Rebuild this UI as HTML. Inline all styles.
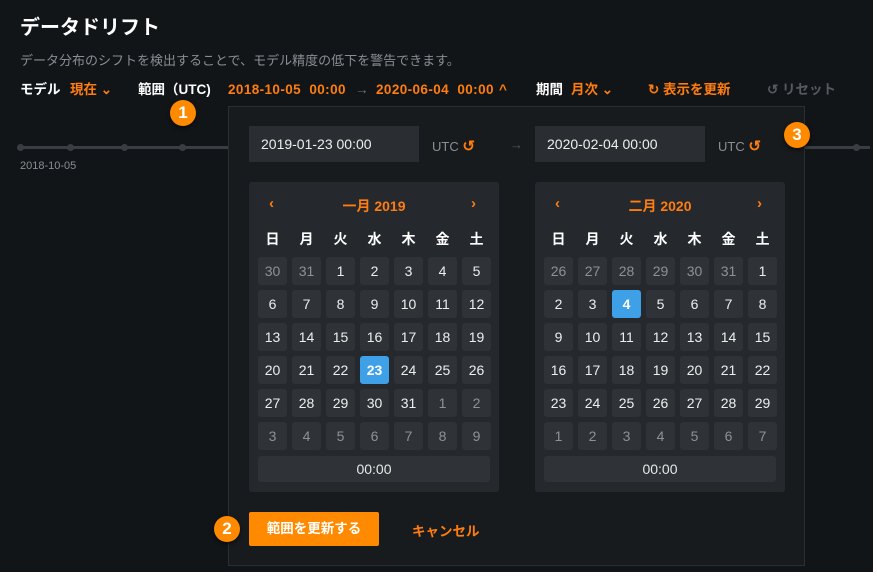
<!DOCTYPE html>
<html><head><meta charset="utf-8"><style>
*{margin:0;padding:0;box-sizing:border-box}
body{width:877px;height:578px;background:#121518;font-family:"Liberation Sans","Noto Sans CJK JP",sans-serif;position:relative;overflow:hidden;color:#e8e8e8}
.a{position:absolute;white-space:nowrap}
.o{color:#ff7d10}
.h{font-size:20px;font-weight:bold;color:#fff;left:20px;top:11px}
.sub{left:20px;top:50px;font-size:13px;color:#8a8e93}
.bar{top:81px;height:18px;line-height:18px;font-size:13.5px;font-weight:bold}
.pop{left:228px;top:106px;width:577px;height:460px;background:#181b1e;border:1px solid #2b2f34}
.inp{top:126px;width:170px;height:36px;background:#2a2d31;font-size:14px;color:#eee;padding:10px 12px}
.utc{top:137px;font-size:13px;color:#8a8e93}
.cal{top:182px;width:250px;height:310px;background:#25282c;border-radius:3px}
.mh{position:absolute;top:14px;left:0;width:100%;text-align:center;font-size:14px;font-weight:bold;color:#ff7d10}
.nav{position:absolute;top:13px;font-size:15px;font-weight:bold;color:#ff7d10}
.wd{position:absolute;top:47px;left:9px;display:grid;grid-template-columns:repeat(7,29px);column-gap:5px;font-size:14px;font-weight:bold;color:#fff;text-align:center}
.g{position:absolute;top:75px;left:9px;display:grid;grid-template-columns:repeat(7,29px);grid-auto-rows:28px;gap:5px}
.g div{background:#2f3237;border-radius:3px;font-size:14px;color:#eee;text-align:center;line-height:28px}
.g .m{color:#8e9297}
.g .s{background:#3ea0e6;color:#fff;font-weight:bold}
.tm{position:absolute;left:9px;top:274px;width:232px;height:26px;background:#2f3237;border-radius:3px;text-align:center;line-height:26px;font-size:14px}
.badge{width:26px;height:26px;border-radius:50%;background:#ff8a00;color:#fff;font-weight:bold;font-size:17px;text-align:center;line-height:26px;box-shadow:0 2px 4px rgba(0,0,0,.6)}
.dot{width:7px;height:7px;border-radius:50%;background:#3a3e43;top:144px}
</style></head><body>
<div class="a h">データドリフト</div>
<div class="a sub">データ分布のシフトを検出することで、モデル精度の低下を警告できます。</div>
<div class="a bar" style="left:20px;color:#fff">モデル</div>
<div class="a bar o" style="left:70px">現在 ⌄</div>
<div class="a bar" style="left:138px;color:#fff">範囲（UTC)</div>
<div class="a bar o" style="left:228px;letter-spacing:0.4px">2018-10-05&nbsp; 00:00</div>
<div class="a bar" style="left:355px;color:#777;font-weight:normal">→</div>
<div class="a bar o" style="left:376px;letter-spacing:0.4px">2020-06-04&nbsp; 00:00</div>
<div class="a bar o" style="left:499px">^</div>
<div class="a bar" style="left:536px;color:#fff">期間</div>
<div class="a bar o" style="left:571px">月次 ⌄</div>
<div class="a bar o" style="left:648px">↻ 表示を更新</div>
<div class="a bar" style="left:767px;color:#555a60">↺ リセット</div>
<div class="a" style="left:20px;top:146px;width:208px;height:3px;background:#3a3e43"></div>
<div class="a dot" style="left:17px"></div><div class="a dot" style="left:67px"></div><div class="a dot" style="left:121px"></div><div class="a dot" style="left:179px"></div>
<div class="a" style="left:805px;top:146px;width:65px;height:3px;background:#3a3e43"></div>
<div class="a dot" style="left:853px"></div>
<div class="a" style="left:20px;top:160px;font-size:11px;color:#8a8e93">2018-10-05</div>
<div class="a pop"></div>
<div class="a inp" style="left:249px">2019-01-23 00:00</div>
<div class="a utc" style="left:432px">UTC <span class="o" style="font-weight:bold;font-size:15px">↺</span></div>
<div class="a utc" style="left:510px;color:#555">→</div>
<div class="a inp" style="left:535px">2020-02-04 00:00</div>
<div class="a utc" style="left:718px">UTC <span class="o" style="font-weight:bold;font-size:15px">↺</span></div>
<div class="a cal" style="left:249px"><div class="mh">一月 2019</div><div class="nav" style="left:20px">‹</div><div class="nav" style="left:222px">›</div>
<div class="wd"><span>日</span><span>月</span><span>火</span><span>水</span><span>木</span><span>金</span><span>土</span></div>
<div class="g"><div class="m">30</div><div class="m">31</div><div>1</div><div>2</div><div>3</div><div>4</div><div>5</div><div>6</div><div>7</div><div>8</div><div>9</div><div>10</div><div>11</div><div>12</div><div>13</div><div>14</div><div>15</div><div>16</div><div>17</div><div>18</div><div>19</div><div>20</div><div>21</div><div>22</div><div class="s">23</div><div>24</div><div>25</div><div>26</div><div>27</div><div>28</div><div>29</div><div>30</div><div>31</div><div class="m">1</div><div class="m">2</div><div class="m">3</div><div class="m">4</div><div class="m">5</div><div class="m">6</div><div class="m">7</div><div class="m">8</div><div class="m">9</div></div>
<div class="tm">00:00</div></div>
<div class="a cal" style="left:535px"><div class="mh">二月 2020</div><div class="nav" style="left:20px">‹</div><div class="nav" style="left:222px">›</div>
<div class="wd"><span>日</span><span>月</span><span>火</span><span>水</span><span>木</span><span>金</span><span>土</span></div>
<div class="g"><div class="m">26</div><div class="m">27</div><div class="m">28</div><div class="m">29</div><div class="m">30</div><div class="m">31</div><div>1</div><div>2</div><div>3</div><div class="s">4</div><div>5</div><div>6</div><div>7</div><div>8</div><div>9</div><div>10</div><div>11</div><div>12</div><div>13</div><div>14</div><div>15</div><div>16</div><div>17</div><div>18</div><div>19</div><div>20</div><div>21</div><div>22</div><div>23</div><div>24</div><div>25</div><div>26</div><div>27</div><div>28</div><div>29</div><div class="m">1</div><div class="m">2</div><div class="m">3</div><div class="m">4</div><div class="m">5</div><div class="m">6</div><div class="m">7</div></div>
<div class="tm">00:00</div></div>
<div class="a" style="left:249px;top:512px;width:130px;height:34px;background:#ff8a00;border-radius:2px;color:#fff;font-size:13.5px;font-weight:bold;text-align:center;line-height:34px">範囲を更新する</div>
<div class="a o" style="left:412px;top:520px;font-size:13.5px;font-weight:bold">キャンセル</div>
<div class="a badge" style="left:170px;top:100px">1</div>
<div class="a badge" style="left:214px;top:516px">2</div>
<div class="a badge" style="left:784px;top:122px">3</div>
<div class="a" style="left:873px;top:0;width:4px;height:578px;background:#fff"></div>
<div class="a" style="left:0;top:572px;width:877px;height:6px;background:#fff"></div>
</body></html>
